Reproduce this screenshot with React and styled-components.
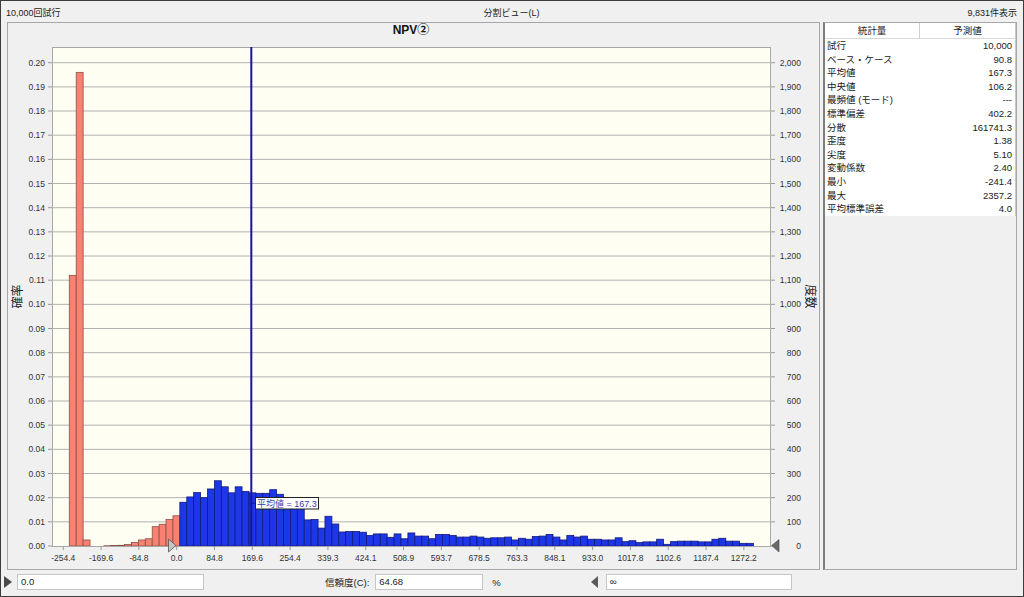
import React from "react";
import styled, { createGlobalStyle } from "styled-components";

const UI_FONT = `"Liberation Sans", "Noto Sans CJK JP", sans-serif`;

const GlobalStyle = createGlobalStyle`
  html, body { margin: 0; padding: 0; background: #f0f0f0; }
  body { font-family: ${UI_FONT}; font-size: 9px; color: #1a1a1a; }
  * { box-sizing: border-box; }
`;

const Window = styled.div`
  width: 1024px;
  height: 597px;
  border: 1px solid #3c3c3c;
  background: #f0f0f0;
  display: flex;
  flex-direction: column;
  overflow: hidden;
`;

const TopBar = styled.div`
  height: 21px;
  display: grid;
  grid-template-columns: 1fr auto 1fr;
  align-items: center;
  padding: 1px 6px 0 5px;
  font-size: 9px;
  color: #222;
`;

const TopCell = styled.div`
  text-align: ${(p) => p.$align || "left"};
`;

const Main = styled.div`
  height: 548px;
  display: flex;
  gap: 3px;
  padding: 0 6px;
`;

const ChartPanel = styled.div`
  width: 813px;
  height: 548px;
  border: 1px solid #a7a7a7;
  display: flex;
  flex-direction: column;
`;

const ChartTitle = styled.div`
  height: 22px;
  padding: 1px 5px 0 0;
  text-align: center;
  font-family: "Liberation Sans", "Noto Sans CJK JP", sans-serif;
  font-weight: bold;
  font-size: 12px;
  line-height: 13px;
  color: #111;
`;

const ChartSvg = styled.svg`
  display: block;
  width: 811px;
  height: 524px;
`;

const StatsPanel = styled.div`
  width: 194px;
  height: 548px;
  border: 1px solid #a7a7a7;
  border-left: 2px solid #7d7d7d;
  background: #f0f0f0;
`;

const StatsTable = styled.div`
  background: #fff;
  border-right: 1px solid #c8c8c8;
`;

const HeaderRow = styled.div`
  display: grid;
  grid-template-columns: 95px 1fr;
  height: 16px;
  border-bottom: 1px solid #d8d8d8;
  background: #fff;
`;

const HeaderCell = styled.div`
  text-align: center;
  line-height: 15px;
  font-size: 9.5px;
  color: #222;
  border-right: ${(p) => (p.$divider ? "1px solid #cfcfcf" : "none")};
`;

const StatRow = styled.div`
  display: flex;
  justify-content: space-between;
  height: 13.6px;
  line-height: 13.6px;
  padding: 0 3px 0 2px;
  font-size: 9.5px;
  color: #1a1a1a;
`;

const BottomBar = styled.div`
  height: 26px;
  display: flex;
  align-items: center;
  padding: 0 0 2px 3px;
  font-size: 9.5px;
  color: #222;
`;

const Arrow = styled.div`
  width: 0;
  height: 0;
  margin-left: ${(p) => p.$ml || 0}px;
  border-top: 6px solid transparent;
  border-bottom: 6px solid transparent;
  ${(p) =>
    p.$dir === "left"
      ? "border-right: 7px solid #5a5a5a;"
      : "border-left: 8px solid #4a4a4a;"}
`;

const Field = styled.div`
  width: ${(p) => p.$w}px;
  height: 16px;
  margin-left: ${(p) => p.$ml || 0}px;
  background: #fff;
  border: 1px solid #c6c6c6;
  padding: 0 3px;
  line-height: 14px;
  font-size: 9.5px;
  color: #222;
`;

const Label = styled.div`
  margin-left: ${(p) => p.$ml || 0}px;
  white-space: nowrap;
`;

/* ---------- chart data ---------- */
const HEIGHTS = [
  0.112, 0.196, 0.0025, 0, 0, 0.0001, 0.0002, 0.0003, 0.0006, 0.0015, 0.0025, 0.003, 0.008, 0.009, 0.011, 0.0125,
  0.0181, 0.0203, 0.0221, 0.02, 0.0236, 0.027, 0.0245, 0.022, 0.0245, 0.0226, 0.022, 0.0218, 0.0218, 0.0233, 0.0214,
  0.0195, 0.0195, 0.0195, 0.0108, 0.011, 0.0074,
  0.0123, 0.0091, 0.0058, 0.006, 0.006, 0.0057, 0.0044, 0.005, 0.005, 0.0036, 0.005, 0.003, 0.0054, 0.0041, 0.0041,
  0.003, 0.0048, 0.0048, 0.0044, 0.0037, 0.0037, 0.0041, 0.0037, 0.0032, 0.0034, 0.0034, 0.0037, 0.0025, 0.0032,
  0.0028, 0.0039, 0.0041, 0.0048, 0.0037, 0.0025, 0.0044, 0.0037, 0.0041, 0.0028, 0.0028, 0.0025, 0.0025, 0.0034,
  0.0018, 0.0022, 0.0014, 0.0017, 0.0017, 0.0028, 0.0007, 0.0018,
  0.002, 0.002, 0.002, 0.0017, 0.0017, 0.0028, 0.0032, 0.002, 0.002, 0.0011, 0.0011,
];

const PLOT = { left: 44, top: 2, right: 763, bottom: 501 };
const YPX = 2416.5; // px per unit probability
const BIN_X0 = 61.3;
const BIN_W = 6.91;
const ZERO_X = 168.7;
const TICK_STEP = 37.81;

const yOf = (p) => PLOT.bottom - p * YPX;

const xLabels = [
  "-254.4", "-169.6", "-84.8", "0.0", "84.8", "169.6", "254.4", "339.3", "424.1", "508.9",
  "593.7", "678.5", "763.3", "848.1", "933.0", "1017.8", "1102.6", "1187.4", "1272.2",
];

const fmtFreq = (n) => (n >= 1000 ? `${Math.floor(n / 1000)},${String(n % 1000).padStart(3, "0")}` : String(n));

function Histogram() {
  const grid = [];
  for (let i = 0; i <= 20; i++) {
    const y = yOf(i / 100);
    grid.push(
      <g key={i}>
        {i > 0 && <line x1={PLOT.left} x2={PLOT.right} y1={y} y2={y} stroke="#b2b2b2" strokeWidth="1" />}
        <line x1={PLOT.left - 4} x2={PLOT.left} y1={y} y2={y} stroke="#9a9a9a" strokeWidth="1" />
        <line x1={PLOT.right} x2={PLOT.right + 4} y1={y} y2={y} stroke="#9a9a9a" strokeWidth="1" />
        <text x={37} y={y + 3} textAnchor="end" fontSize="8.5" fill="#333" fontFamily="Liberation Sans, sans-serif">
          {(i / 100).toFixed(2)}
        </text>
        <text x={793} y={y + 3} textAnchor="end" fontSize="8.5" fill="#333" fontFamily="Liberation Sans, sans-serif">
          {fmtFreq(i * 100)}
        </text>
      </g>
    );
  }

  const bars = HEIGHTS.map((h, i) => {
    if (h <= 0) return null;
    const x = BIN_X0 + i * BIN_W;
    const red = i < 16;
    return (
      <rect
        key={i}
        x={x}
        y={yOf(h)}
        width={BIN_W}
        height={h * YPX}
        fill={red ? "#f98172" : "#1c37e8"}
        stroke={red ? "#8a5148" : "#15187e"}
        strokeWidth="0.8"
      />
    );
  });

  const meanX = 243.3;

  return (
    <ChartSvg viewBox="0 0 811 524">
      <rect
        x={PLOT.left + 0.5}
        y={PLOT.top + 0.5}
        width={PLOT.right - PLOT.left - 1}
        height={PLOT.bottom - PLOT.top}
        fill="#fefef2"
        stroke="#a8a8a8"
        strokeWidth="1"
      />
      {grid}
      {bars}
      <line x1={PLOT.left} x2={PLOT.right} y1={PLOT.bottom + 0.5} y2={PLOT.bottom + 0.5} stroke="#a8a8a8" strokeWidth="1" />
      {xLabels.map((l, k) => {
        const x = ZERO_X + (k - 3) * TICK_STEP;
        return (
          <g key={l}>
            <line x1={x} x2={x} y1={PLOT.bottom} y2={PLOT.bottom + 4} stroke="#9a9a9a" strokeWidth="1" />
            <text x={x} y={515.5} textAnchor="middle" fontSize="8.5" fill="#333" fontFamily="Liberation Sans, sans-serif">
              {l}
            </text>
          </g>
        );
      })}
      {/* mean line */}
      <line x1={meanX} x2={meanX} y1={PLOT.top} y2={PLOT.bottom} stroke="#16169a" strokeWidth="2" />
      <line x1={meanX} x2={meanX + 5} y1={458.3} y2={458.3} stroke="#16169a" strokeWidth="1" />
      <rect x={247.5} y={452.5} width={63} height={11.5} fill="#fff" stroke="#222" strokeWidth="1" />
      <text x={249} y={461.5} fontSize="9" fill="#3b3bb0" fontFamily="Liberation Sans, Noto Sans CJK JP, sans-serif">
        平均値 = 167.3
      </text>
      {/* certainty grabbers */}
      <polygon points="160.5,494 168,500.5 160.5,507" fill="#c4c4c4" stroke="#555" strokeWidth="0.8" />
      <polygon points="763.7,500.5 771,494.5 771,507" fill="#6a6a6a" stroke="#444" strokeWidth="0.6" />
      {/* axis titles */}
      <text
        x={8.5}
        y={251.5}
        transform="rotate(-90 8.5 251.5)"
        textAnchor="middle"
        dominantBaseline="central"
        fontSize="12"
        fill="#222"
        fontFamily="Noto Sans CJK JP, sans-serif"
      >
        確率
      </text>
      <text
        x={803.5}
        y={251.5}
        transform="rotate(90 803.5 251.5)"
        textAnchor="middle"
        dominantBaseline="central"
        fontSize="12"
        fill="#222"
        fontFamily="Noto Sans CJK JP, sans-serif"
      >
        度数
      </text>
    </ChartSvg>
  );
}

const STATS = [
  ["試行", "10,000"],
  ["ベース・ケース", "90.8"],
  ["平均値", "167.3"],
  ["中央値", "106.2"],
  ["最頻値 (モード)", "---"],
  ["標準偏差", "402.2"],
  ["分散", "161741.3"],
  ["歪度", "1.38"],
  ["尖度", "5.10"],
  ["変動係数", "2.40"],
  ["最小", "-241.4"],
  ["最大", "2357.2"],
  ["平均標準誤差", "4.0"],
];

export default function App() {
  return (
    <>
      <GlobalStyle />
      <Window>
        <TopBar>
          <TopCell>10,000回試行</TopCell>
          <TopCell $align="center">分割ビュー(L)</TopCell>
          <TopCell $align="right">9,831件表示</TopCell>
        </TopBar>
        <Main>
          <ChartPanel>
            <ChartTitle>NPV②</ChartTitle>
            <Histogram />
          </ChartPanel>
          <StatsPanel>
            <StatsTable>
              <HeaderRow>
                <HeaderCell $divider>統計量</HeaderCell>
                <HeaderCell>予測値</HeaderCell>
              </HeaderRow>
              {STATS.map(([k, v]) => (
                <StatRow key={k}>
                  <span>{k}</span>
                  <span>{v}</span>
                </StatRow>
              ))}
            </StatsTable>
          </StatsPanel>
        </Main>
        <BottomBar>
          <Arrow $dir="right" />
          <Field $w={187} $ml={5}>0.0</Field>
          <Label $ml={121}>信頼度(C):</Label>
          <Field $w={108} $ml={6}>64.68</Field>
          <Label $ml={9}>%</Label>
          <Arrow $dir="left" $ml={90} />
          <Field $w={186} $ml={8}>∞</Field>
        </BottomBar>
      </Window>
    </>
  );
}
